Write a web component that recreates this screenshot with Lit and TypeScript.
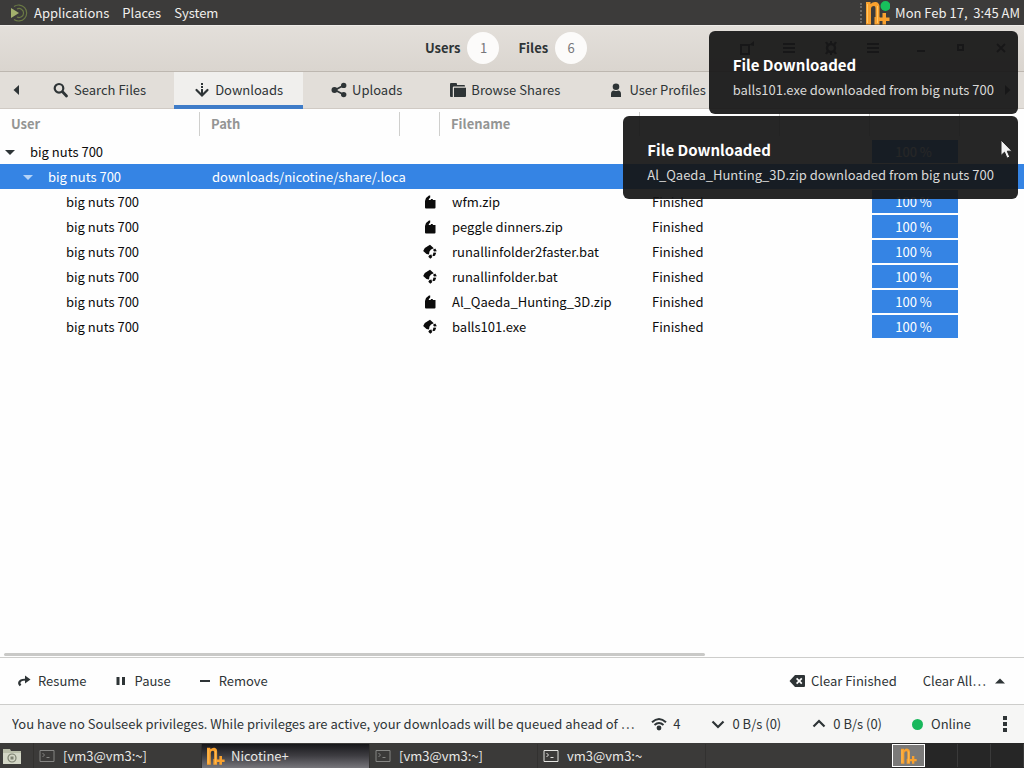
import { LitElement, html, svg, css, nothing } from "lit";
import { customElement } from "lit/decorators.js";
import { classMap } from "lit/directives/class-map.js";

const glyphs: Record<string, unknown> = {
  search: svg`<circle cx="6" cy="6.300" r="4.300" fill="none" stroke="currentColor" stroke-width="2.200"/><path d="M9.500 9.800l4 4.200" stroke="currentColor" stroke-width="2.800" stroke-linecap="round"/>`,
  download: svg`<path d="M7 1h2v2H7zM7 4h2v2H7zM7 7h2v5H7z"/><path d="M2.5 8L8 13.5 13.5 8" fill="none" stroke="currentColor" stroke-width="2.2" stroke-linecap="round"/>`,
  share: svg`<circle cx="3.5" cy="8" r="3"/><circle cx="12.7" cy="3.4" r="2.7"/><circle cx="12.7" cy="12.6" r="2.7"/><path d="M12.5 3.5L4 8l8.500 4.500" fill="none" stroke="currentColor" stroke-width="1.8"/>`,
  folder: svg`<path d="M0 2q0-1 1-1h5q1 0 1 1v1h7q1 0 1 1v.6H3.800q-1 0-1 1V15H1q-1 0-1-1z"/><path d="M4 5.800h12V14q0 1-1 1H4z"/>`,
  user: svg`<circle cx="8" cy="4.800" r="3.300"/><path d="M3 15v-3q0-3.500 3-3.500 2 1.200 4 0 3 0 3 3.500v3z"/>`,
  left: svg`<path d="M11 3v10L5.500 8z"/>`,
  right: svg`<path d="M5 3v10l5.500-5z"/>`,
  down: svg`<path d="M3 6h10l-5 5z"/>`,
  up: svg`<path d="M3 10.500h10L8 5.500z"/>`,
  archive: svg`<path d="M3 7l1-3 3-2.500h1.200v2L6.800 5.200V6h2V5h2v1h2.700v7.500q0 1-1 1H4q-1 0-1-1z"/>`,
  script: svg`<path d="M8 .8l3.800 3.400L9 5.500 7.500 7.500 7 10.500 4.500 10 1.200 7l1.600-3zM13.300 4.500l1.500 2.700-2.800.4-1-1.800zM11.500 8.500l2.700.3-1.200 3-2.600.5zM7.500 11l2-.6.6 2.800-1.800 1.500-2-1.900z"/>`,
  redo: svg`<path d="M4.500 12.500C1.500 9 4 6.500 11 6.500" fill="none" stroke="currentColor" stroke-width="2.200"/><path d="M9 2.500l5.500 4L9 10.500z"/>`,
  pause: svg`<path d="M3.500 4h3v8h-3zM9 4h3v8H9z"/>`,
  minus: svg`<path d="M3 7h10v2H3z"/>`,
  erase: svg`<path fill-rule="evenodd" d="M6 2h9q1 0 1 1v10q0 1-1 1H6L.5 8zM8.200 4.800L7 6l2 2-2 2 1.200 1.200 2-2 2 2L13.400 10l-2-2 2-2-1.200-1.200-2 2z"/>`,
  wifi: svg`<g fill="none" stroke="currentColor" stroke-width="2"><path d="M1 6.200q7-6.400 14 0"/><path d="M3.500 9q4.500-4 9 0"/></g><circle cx="8" cy="12" r="2.400"/>`,
  chevDown: svg`<path d="M2.500 5.500L8 11l5.500-5.500" fill="none" stroke="currentColor" stroke-width="2.200"/>`,
  chevUp: svg`<path d="M2.500 10.500L8 5l5.500 5.500" fill="none" stroke="currentColor" stroke-width="2.200"/>`,
  kebab: svg`<path d="M6 0h4v4H6zM6 6h4v4H6zM6 12h4v4H6z"/>`,
  detach: svg`<path d="M2 5h8v9H2z" fill="none" stroke="currentColor" stroke-width="2"/><path d="M10 5l5-4v5z"/>`,
  menu: svg`<path d="M2 3h12v2H2zM2 7h12v2H2zM2 11h12v2H2z"/>`,
  gear: svg`<circle cx="8" cy="8" r="4" fill="none" stroke="currentColor" stroke-width="2.500"/><path d="M7 1h2v3H7zM7 12h2v3H7zM2 2.500l2-1 2 3-2 1zM10 11.500l2-1 2 3-2 1zM2 13.500l2-3 2 1-2 3zM10 4.500l2-3 2 1-2 3z"/>`,
  minimize: svg`<path d="M4 10h8v2H4z"/>`,
  maximize: svg`<path d="M5 5h5v5H5z" fill="none" stroke="currentColor" stroke-width="2"/>`,
  close: svg`<path d="M4 4l8 8M12 4l-8 8" stroke="currentColor" stroke-width="2"/>`,
  terminal: svg`<path d="M1 2.500h14v11H1z" fill="none" stroke="currentColor"/><path d="M3.500 5l2 2-2 2M7.500 9.500h3" fill="none" stroke="currentColor"/>`,
};

const icon = (name: string, cls = "") =>
  html`<svg class="icon ${cls}" viewBox="0 0 16 16" fill="currentColor" aria-hidden="true">${glyphs[name]}</svg>`;

const logo = (cls: string, online = false) => html`
  <svg class=${cls} viewBox="0 0 24 24" aria-hidden="true">
    <path d="M0 1h4.500v2Q7 .500 10 1q3.500.800 3.500 5v11H9.500V7q0-2-1.500-2Q5 5 5 8v15.500H0z" fill="#f9a12e"/>
    <path d="M8.500 16h5v7.500h-5zM13 16.500h3.500V12H20v4.500h3.500V20H20v3.500h-3.500V20H13z" fill="#f9a12e"/>
    <path d="M1.500 3v19M11.500 5v17" stroke="#ffc766"/>
    ${online ? svg`<circle cx="19.500" cy="5" r="5" fill="#18c05c"/>` : nothing}
  </svg>`;

interface Row {
  depth: number;
  path?: string;
  kind?: string;
  file?: string;
  status?: string;
  selected?: boolean;
}

const rows: Row[] = [
  { depth: 0 },
  { depth: 1, path: "downloads/nicotine/share/.loca", selected: true },
  { depth: 2, kind: "archive", file: "wfm.zip", status: "Finished" },
  { depth: 2, kind: "archive", file: "peggle dinners.zip", status: "Finished" },
  { depth: 2, kind: "script", file: "runallinfolder2faster.bat", status: "Finished" },
  { depth: 2, kind: "script", file: "runallinfolder.bat", status: "Finished" },
  { depth: 2, kind: "archive", file: "Al_Qaeda_Hunting_3D.zip", status: "Finished" },
  { depth: 2, kind: "script", file: "balls101.exe", status: "Finished" },
];

const tabs = [
  ["search", "Search Files"],
  ["download", "Downloads"],
  ["share", "Uploads"],
  ["folder", "Browse Shares"],
  ["user", "User Profiles"],
];

@customElement("app-root")
export class AppRoot extends LitElement {
  static styles = css`
    :host {
      display: flex;
      flex-direction: column;
      position: relative;
      height: 100vh;
      overflow: hidden;
      background: #fefefe;
      color: #2e3436;
      font: 13px/18px "Noto Sans CJK SC", "Noto Sans", sans-serif;
      white-space: nowrap;
    }
    * { box-sizing: border-box; }
    button {
      display: flex;
      align-items: center;
      margin: 0;
      padding: 0;
      border: 0;
      background: none;
      color: inherit;
      font: inherit;
    }
    .icon { width: 16px; height: 16px; flex: none; display: block; }

    .panel {
      display: flex;
      align-items: center;
      height: 25px;
      flex: none;
      padding: 0 4px 0 10px;
      background: #3c3b3a;
      color: #f0efed;
    }
    .menus { display: flex; gap: 13px; flex: 1; }
    .menus button { gap: 6px; }
    .mate { width: 18px; height: 18px; }
    .grip { width: 4px; height: 20px; border-left: 2px dotted #6b6a68; margin-right: 2px; }
    .tray { width: 24px; height: 24px; margin-right: 5px; }

    .header {
      display: grid;
      grid-template-columns: 1fr auto 1fr;
      align-items: center;
      height: 47px;
      flex: none;
      padding: 0 12px 1px 0;
      background: linear-gradient(#e3dfda, #dad5cf);
      border-top: 1px solid #eeebe8;
      border-bottom: 1px solid #bdb7b0;
    }
    .counts { grid-column: 2; display: flex; gap: 19px; }
    .count { display: flex; align-items: center; gap: 7px; font-weight: 700; }
    .badge {
      width: 32px;
      height: 32px;
      border-radius: 16px;
      background: #fcfbfa;
      color: #77777a;
      line-height: 32px;
      text-align: center;
      font-weight: 400;
    }
    .controls { display: flex; justify-content: flex-end; gap: 26px; }
    .group { display: flex; gap: 20px; }
    .group button { width: 22px; justify-content: center; }
    .group.window { gap: 18px; }

    .tabs {
      display: flex;
      height: 37px;
      flex: none;
      background: #e2ded9;
      gap: 8px;
      border-bottom: 1px solid #d0cac4;
    }
    .tab { height: 37px; padding: 0 20px; gap: 5px; border-bottom: 4px solid transparent; border-top: 3px solid transparent; }
    .tab.active { background: #f0efed; border-top-color: #f0efed; border-bottom-color: #3f7cc8; }
    .scroll { width: 25px; justify-content: center; }
    .scroll.prev { padding-left: 7px; }
    .scroll.next { margin-left: auto; width: 32px; }

    .list { flex: 1; min-height: 0; overflow: hidden; }
    table { width: 100%; table-layout: fixed; border-collapse: collapse; color: #0c0c0c; }
    th, td { padding: 0 0 0 12px; text-align: left; }
    th { height: 30px; padding: 0; color: #949594; font-weight: 700; }
    th span { display: block; height: 24px; line-height: 24px; padding-left: 11px; border-right: 1px solid #cfcfcd; }
    th.last span { border-right: 0; }
    td { height: 25px; }
    .c200 { width: 200px; }
    .c40 { width: 40px; }
    .c140 { width: 140px; }
    .c90 { width: 90px; }
    td.user { padding-left: 0; }
    .node { display: flex; align-items: center; }
    .depth0 { padding-left: 2px; gap: 12px; }
    .depth1 { padding-left: 20px; gap: 12px; }
    .depth2 { padding-left: 66px; }
    .depth0 .icon { color: #2e3436; }
    tr.selected { background: #3584e4; color: #fff; }
    tr.selected .icon { color: #b5d3f7; }
    td.kind { padding-left: 22px; }
    td.bar { padding: 0 2px; }
    .progress { height: 23px; line-height: 23px; background: #3584e4; color: #fff; text-align: center; padding-right: 3px; }

    .hscroll { height: 4px; flex: none; padding: 0 4px; }
    .thumb { width: 69%; height: 3px; border-radius: 2px; background: #c9c9c7; }

    .actions {
      display: flex;
      height: 47px;
      flex: none;
      gap: 6px;
      padding: 0 6px;
      border-top: 1px solid #cdcdcb;
    }
    .actions button { padding: 0 10px; gap: 6px; }
    .actions .end { margin-left: auto; }
    .status {
      display: flex;
      align-items: center;
      height: 39px;
      flex: none;
      padding: 0 11px 0 12px;
      background: #f6f6f5;
      border-top: 1px solid #cdcdcb;
    }
    .notice { flex: 1; min-width: 0; overflow: hidden; }
    .meters { display: flex; gap: 30px; }
    .meters button { gap: 6px; }
    .dot { width: 11px; height: 11px; border-radius: 6px; background: #19b85c; margin-right: 2px; }
    .more { margin-left: 26px; }

    .taskbar {
      display: flex;
      align-items: center;
      height: 25px;
      flex: none;
      background: #3b3a39;
      color: #e9e8e6;
    }
    .desk { width: 34px; padding-left: 2px; border-right: 1px solid #32312f; height: 25px; }
    .desk svg { width: 20px; height: 18px; }
    .tasks { display: flex; flex: 1; min-width: 0; }
    .task { width: 168px; height: 24px; padding-left: 5px; gap: 8px; border-right: 1px solid #323130; }
    .task .icon { color: #858583; }
    .task .icon.lit { color: #e3e3e0; }
    .task.active { background: linear-gradient(#17171a, #3f3e43 50%, #77767b); gap: 6px; }
    .task .small { width: 18px; height: 18px; }
    .spaces { display: flex; height: 25px; background: #262626; padding: 1px 0; }
    .space { width: 33px; justify-content: center; border-right: 1px solid #3a3a3a; }
    .space.active { background: #7b7a79; border: 1px solid #fff; }
    .space .small { width: 16px; height: 16px; }

    .toasts {
      position: absolute;
      top: 31px;
      right: 6px;
      display: flex;
      flex-direction: column;
      align-items: flex-end;
      gap: 2px;
    }
    .toast {
      height: 83px;
      padding: 23px 24px 0;
      border-radius: 6px;
      background: rgba(22, 22, 22, 0.93);
      color: #d9d9d8;
    }
    .toast h2 { margin: 0 0 5px; font-size: 15px; line-height: 22px; font-weight: 700; color: #fff; }
    .toast p { margin: 0; }
    .cursor { position: absolute; top: 139px; right: 10px; width: 14px; height: 21px; }
  `;

  private headerButton(name: string, label: string) {
    return html`<button aria-label=${label}>${icon(name)}</button>`;
  }

  private row(r: Row) {
    return html`<tr class=${classMap({ selected: !!r.selected })}>
      <td class="user"><div class="node depth${r.depth}">${r.depth < 2 ? icon("down") : nothing}<span>big nuts 700</span></div></td>
      <td>${r.path}</td>
      <td class="kind">${r.kind ? icon(r.kind) : nothing}</td>
      <td>${r.file}</td>
      <td>${r.status}</td>
      <td></td>
      <td class="bar">${r.selected ? nothing : html`<div class="progress">100 %</div>`}</td>
      <td></td>
    </tr>`;
  }

  render() {
    return html`
      <nav class="panel">
        <div class="menus">
          <button>
            <svg class="mate" viewBox="0 0 18 18" aria-hidden="true">
              <path d="M4 2.500A8 8 0 1 1 4 15.500" fill="none" stroke="#6b7a45" stroke-width="1.200"/>
              <path d="M7 5A4.500 4.500 0 1 1 7 13" fill="none" stroke="#6b7a45" stroke-width="1.200"/>
              <path d="M1 4l8 5-8 5z" fill="#a3b16d"/>
            </svg>Applications</button>
          <button>Places</button>
          <button>System</button>
        </div>
        <span class="grip"></span>
        ${logo("tray", true)}
        <button>Mon Feb 17,&nbsp; 3:45 AM</button>
      </nav>

      <header class="header">
        <div class="counts">
          <div class="count">Users <span class="badge">1</span></div>
          <div class="count">Files <span class="badge">6</span></div>
        </div>
        <div class="controls">
          <div class="group">
            ${this.headerButton("detach", "Open")}${this.headerButton("menu", "List")}${this.headerButton("gear", "Preferences")}${this.headerButton("menu", "Menu")}
          </div>
          <div class="group window">
            ${this.headerButton("minimize", "Minimize")}${this.headerButton("maximize", "Maximize")}${this.headerButton("close", "Close")}
          </div>
        </div>
      </header>

      <nav class="tabs">
        <button class="scroll prev" aria-label="Previous tab">${icon("left")}</button>
        ${tabs.map(([i, label]) => html`<button class=${classMap({ tab: true, active: label === "Downloads" })}>${icon(i)}${label}</button>`)}
        <button class="scroll next" aria-label="Next tab">${icon("right")}</button>
      </nav>

      <main class="list">
        <table>
          <colgroup>
            <col class="c200" /><col class="c200" /><col class="c40" /><col class="c200" />
            <col class="c140" /><col class="c90" /><col class="c90" /><col />
          </colgroup>
          <thead>
            <tr>
              <th><span>User</span></th><th><span>Path</span></th><th><span></span></th><th><span>Filename</span></th>
              <th><span></span></th><th><span></span></th><th><span></span></th><th class="last"><span></span></th>
            </tr>
          </thead>
          <tbody>${rows.map((r) => this.row(r))}</tbody>
        </table>
      </main>
      <div class="hscroll"><div class="thumb"></div></div>

      <div class="actions">
        <button>${icon("redo")}Resume</button>
        <button>${icon("pause")}Pause</button>
        <button>${icon("minus")}Remove</button>
        <button class="end">${icon("erase")}Clear Finished</button>
        <button>Clear All…${icon("up")}</button>
      </div>

      <footer class="status">
        <div class="notice">You have no Soulseek privileges. While privileges are active, your downloads will be queued ahead of …</div>
        <div class="meters">
          <button>${icon("wifi")}4</button>
          <button>${icon("chevDown")}0 B/s (0)</button>
          <button>${icon("chevUp")}0 B/s (0)</button>
          <button><span class="dot"></span>Online</button>
        </div>
        <button class="more" aria-label="More">${icon("kebab")}</button>
      </footer>

      <nav class="taskbar">
        <button class="desk" aria-label="Files">
          <svg viewBox="0 0 20 18" aria-hidden="true">
            <path d="M1 2h7l1 2h10v13H1z" fill="#b9bda9"/><path d="M1 6h18v11H1z" fill="#d3d6c6"/>
            <circle cx="10" cy="11" r="4" fill="none" stroke="#7c8070" stroke-width="1.200"/><path d="M8.500 9.500h3v3h-3z" fill="#7c8070"/>
          </svg>
        </button>
        <div class="tasks">
          <button class="task">${icon("terminal")}[vm3@vm3:~]</button>
          <button class="task active">${logo("small")}Nicotine+</button>
          <button class="task">${icon("terminal")}[vm3@vm3:~]</button>
          <button class="task">${icon("terminal", "lit")}vm3@vm3:~</button>
        </div>
        <div class="spaces">
          <button class="space active" aria-label="Workspace 1">${logo("small")}</button>
          <button class="space" aria-label="Workspace 2"></button>
          <button class="space" aria-label="Workspace 3"></button>
          <button class="space" aria-label="Workspace 4"></button>
        </div>
      </nav>

      <div class="toasts">
        <section class="toast"><h2>File Downloaded</h2><p>balls101.exe downloaded from big nuts 700</p></section>
        <section class="toast"><h2>File Downloaded</h2><p>Al_Qaeda_Hunting_3D.zip downloaded from big nuts 700</p></section>
      </div>
      <svg class="cursor" viewBox="0 0 14 21" aria-hidden="true">
        <path d="M1 1v15.500l3.500-3.300 2.500 6 2.800-1.200-2.500-5.800H12z" fill="#f2f2f2" stroke="#222"/>
      </svg>
    `;
  }
}
